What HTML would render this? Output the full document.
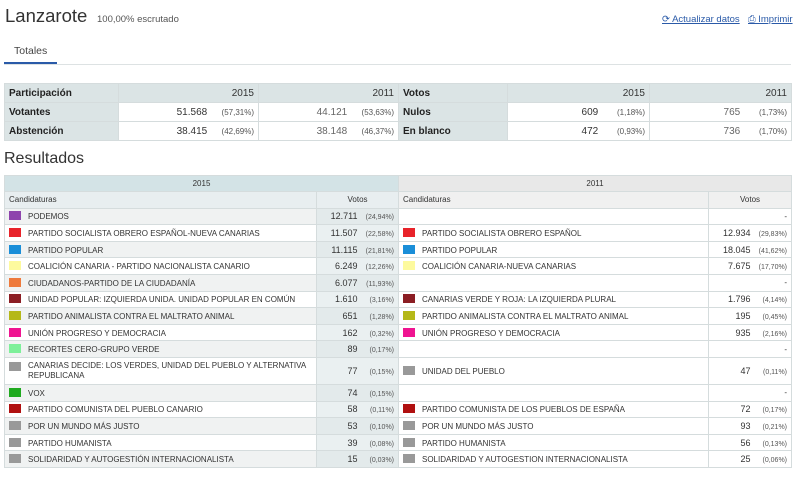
<!DOCTYPE html>
<html><head><meta charset="utf-8"><style>
*{margin:0;padding:0;box-sizing:border-box}
body{width:800px;height:487px;background:#fff;font-family:"Liberation Sans",sans-serif;color:#333;position:relative;overflow:hidden}
.a{position:absolute}
table{border-collapse:collapse;position:absolute;table-layout:fixed}
td{border:1px solid #d5dcdd;font-size:9px;padding:0 4px;white-space:nowrap;overflow:hidden}
.t td{height:19px;font-size:10px}
.t .h{background:#dbe4e5}
.t b{color:#222}
.r{text-align:right}
.p{font-size:7px;color:#555;display:inline-block;width:34px;text-align:right}
.pt{font-size:8px;color:#555;display:inline-block;width:44px;text-align:right}
.res td{height:16.6px;color:#333;font-size:8px}
.res .n{font-size:9px;color:#333}
.sw{display:inline-block;width:12px;height:9px;vertical-align:-1px;margin-right:7px}
.g{background:#f0f2f2}
.L .v{background:#eaf0f1}
.L .g .v{background:#e3eaeb}
</style></head><body>
<div class="a" style="left:5px;top:5px;font-size:18.5px;color:#333">Lanzarote</div>
<div class="a" style="left:97px;top:14px;font-size:9.5px;color:#555">100,00% escrutado</div>
<div class="a" style="left:662px;top:14px;font-size:9.5px;color:#2a5aa8;text-decoration:underline">⟳ Actualizar datos</div>
<div class="a" style="left:748px;top:14px;font-size:9.5px;color:#2a5aa8;text-decoration:underline">⎙ Imprimir</div>
<div class="a" style="left:14px;top:45px;font-size:10.5px;color:#444">Totales</div>
<div class="a" style="left:4px;top:62px;width:53px;height:2px;background:#2a5aa8"></div>
<div class="a" style="left:4px;top:64px;width:787px;height:1px;background:#dde2e3"></div>

<table class="t" style="left:4px;top:83px;width:394px">
<col style="width:114px"><col style="width:140px"><col style="width:140px">
<tr><td class="h"><b>Participación</b></td><td class="h r">2015</td><td class="h r">2011</td></tr>
<tr><td class="h"><b>Votantes</b></td><td class="r">51.568 <span class="pt">(57,31%)</span></td><td class="r" style="color:#666">44.121 <span class="pt">(53,63%)</span></td></tr>
<tr><td class="h"><b>Abstención</b></td><td class="r">38.415 <span class="pt">(42,69%)</span></td><td class="r" style="color:#666">38.148 <span class="pt">(46,37%)</span></td></tr>
</table>
<table class="t" style="left:398px;top:83px;width:393px">
<col style="width:109px"><col style="width:142px"><col style="width:142px">
<tr><td class="h"><b>Votos</b></td><td class="h r">2015</td><td class="h r">2011</td></tr>
<tr><td class="h"><b>Nulos</b></td><td class="r">609 <span class="pt">(1,18%)</span></td><td class="r" style="color:#666">765 <span class="pt">(1,73%)</span></td></tr>
<tr><td class="h"><b>En blanco</b></td><td class="r">472 <span class="pt">(0,93%)</span></td><td class="r" style="color:#666">736 <span class="pt">(1,70%)</span></td></tr>
</table>

<div class="a" style="left:4px;top:150px;font-size:16px;color:#333">Resultados</div>

<table class="res L" style="left:4px;top:175px;width:394px">
<col style="width:312px"><col style="width:82px">
<tr><td colspan="2" style="background:#d3e3e6;text-align:center;height:16px">2015</td></tr>
<tr><td style="background:#e8eef0">Candidaturas</td><td style="background:#e8eef0;text-align:center">Votos</td></tr>
<tr class="g"><td><span class="sw" style="background:#8e44ad"></span>PODEMOS</td><td class="r v n">12.711 <span class="p">(24,94%)</span></td></tr>
<tr><td><span class="sw" style="background:#e8232a"></span>PARTIDO SOCIALISTA OBRERO ESPAÑOL-NUEVA CANARIAS</td><td class="r v n">11.507 <span class="p">(22,58%)</span></td></tr>
<tr class="g"><td><span class="sw" style="background:#1a8ed8"></span>PARTIDO POPULAR</td><td class="r v n">11.115 <span class="p">(21,81%)</span></td></tr>
<tr><td><span class="sw" style="background:#fdfa9e"></span>COALICIÓN CANARIA - PARTIDO NACIONALISTA CANARIO</td><td class="r v n">6.249 <span class="p">(12,26%)</span></td></tr>
<tr class="g"><td><span class="sw" style="background:#ee7a3c"></span>CIUDADANOS-PARTIDO DE LA CIUDADANÍA</td><td class="r v n">6.077 <span class="p">(11,93%)</span></td></tr>
<tr><td><span class="sw" style="background:#8b1e24"></span>UNIDAD POPULAR: IZQUIERDA UNIDA. UNIDAD POPULAR EN COMÚN</td><td class="r v n">1.610 <span class="p">(3,16%)</span></td></tr>
<tr class="g"><td><span class="sw" style="background:#b5b818"></span>PARTIDO ANIMALISTA CONTRA EL MALTRATO ANIMAL</td><td class="r v n">651 <span class="p">(1,28%)</span></td></tr>
<tr><td><span class="sw" style="background:#ef1491"></span>UNIÓN PROGRESO Y DEMOCRACIA</td><td class="r v n">162 <span class="p">(0,32%)</span></td></tr>
<tr class="g"><td><span class="sw" style="background:#7ef09a"></span>RECORTES CERO-GRUPO VERDE</td><td class="r v n">89 <span class="p">(0,17%)</span></td></tr>
<tr><td style="height:27px;line-height:10px;position:relative"><span class="sw" style="background:#999;position:absolute;left:4px;top:4px"></span><div style="padding-left:19px">CANARIAS DECIDE: LOS VERDES, UNIDAD DEL PUEBLO Y ALTERNATIVA<br>REPUBLICANA</div></td><td class="r v n">77 <span class="p">(0,15%)</span></td></tr>
<tr class="g"><td><span class="sw" style="background:#1faa1f"></span>VOX</td><td class="r v n">74 <span class="p">(0,15%)</span></td></tr>
<tr><td><span class="sw" style="background:#b01010"></span>PARTIDO COMUNISTA DEL PUEBLO CANARIO</td><td class="r v n">58 <span class="p">(0,11%)</span></td></tr>
<tr class="g"><td><span class="sw" style="background:#999"></span>POR UN MUNDO MÁS JUSTO</td><td class="r v n">53 <span class="p">(0,10%)</span></td></tr>
<tr><td><span class="sw" style="background:#999"></span>PARTIDO HUMANISTA</td><td class="r v n">39 <span class="p">(0,08%)</span></td></tr>
<tr class="g"><td><span class="sw" style="background:#999"></span>SOLIDARIDAD Y AUTOGESTIÓN INTERNACIONALISTA</td><td class="r v n">15 <span class="p">(0,03%)</span></td></tr>
</table>

<table class="res" style="left:398px;top:175px;width:393px">
<col style="width:310px"><col style="width:83px">
<tr><td colspan="2" style="background:#e8e8e8;text-align:center;height:16px">2011</td></tr>
<tr><td style="background:#f0f0f0">Candidaturas</td><td style="background:#f0f0f0;text-align:center">Votos</td></tr>
<tr><td></td><td class="r">-</td></tr>
<tr><td><span class="sw" style="background:#e8232a"></span>PARTIDO SOCIALISTA OBRERO ESPAÑOL</td><td class="r n">12.934 <span class="p">(29,83%)</span></td></tr>
<tr><td><span class="sw" style="background:#1a8ed8"></span>PARTIDO POPULAR</td><td class="r n">18.045 <span class="p">(41,62%)</span></td></tr>
<tr><td><span class="sw" style="background:#fdfa9e"></span>COALICIÓN CANARIA-NUEVA CANARIAS</td><td class="r n">7.675 <span class="p">(17,70%)</span></td></tr>
<tr><td></td><td class="r">-</td></tr>
<tr><td><span class="sw" style="background:#8b1e24"></span>CANARIAS VERDE Y ROJA: LA IZQUIERDA PLURAL</td><td class="r n">1.796 <span class="p">(4,14%)</span></td></tr>
<tr><td><span class="sw" style="background:#b5b818"></span>PARTIDO ANIMALISTA CONTRA EL MALTRATO ANIMAL</td><td class="r n">195 <span class="p">(0,45%)</span></td></tr>
<tr><td><span class="sw" style="background:#ef1491"></span>UNIÓN PROGRESO Y DEMOCRACIA</td><td class="r n">935 <span class="p">(2,16%)</span></td></tr>
<tr><td></td><td class="r">-</td></tr>
<tr><td style="height:27px"><span class="sw" style="background:#999"></span>UNIDAD DEL PUEBLO</td><td class="r n">47 <span class="p">(0,11%)</span></td></tr>
<tr><td></td><td class="r">-</td></tr>
<tr><td><span class="sw" style="background:#b01010"></span>PARTIDO COMUNISTA DE LOS PUEBLOS DE ESPAÑA</td><td class="r n">72 <span class="p">(0,17%)</span></td></tr>
<tr><td><span class="sw" style="background:#999"></span>POR UN MUNDO MÁS JUSTO</td><td class="r n">93 <span class="p">(0,21%)</span></td></tr>
<tr><td><span class="sw" style="background:#999"></span>PARTIDO HUMANISTA</td><td class="r n">56 <span class="p">(0,13%)</span></td></tr>
<tr><td><span class="sw" style="background:#999"></span>SOLIDARIDAD Y AUTOGESTION INTERNACIONALISTA</td><td class="r n">25 <span class="p">(0,06%)</span></td></tr>
</table>
</body></html>
